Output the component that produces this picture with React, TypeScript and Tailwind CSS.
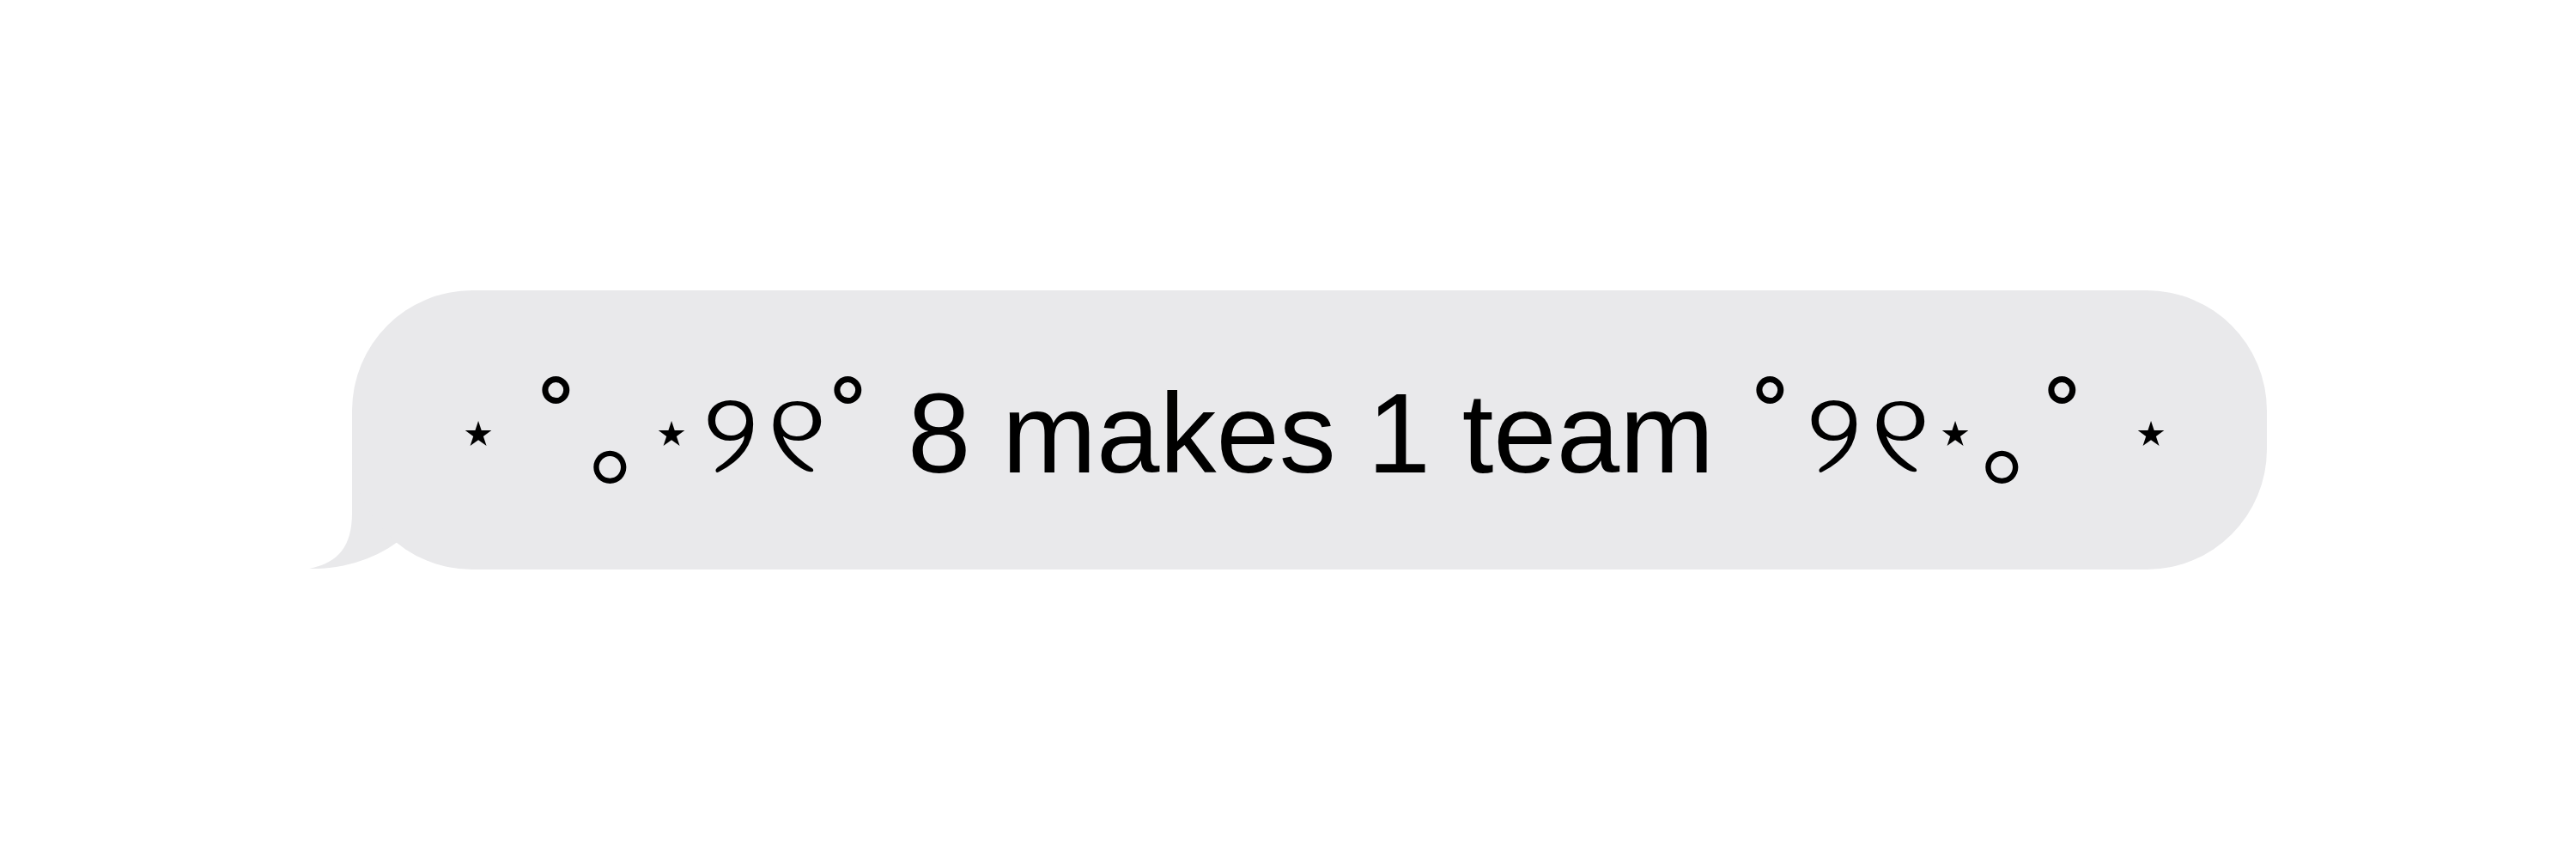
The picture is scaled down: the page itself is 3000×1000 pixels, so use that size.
import React from "react";

const FONT = '"Liberation Sans", "DejaVu Sans", "Noto Sans CJK JP", sans-serif';

function Star({ ml }: { ml: string }) {
  return (
    <span
      className={`${ml} inline-block w-[40px] text-center text-[80px] leading-none translate-y-[-19px]`}
      style={{ fontFamily: '"DejaVu Sans", sans-serif' }}
    >
      ⋆
    </span>
  );
}

function Ring({ ml }: { ml: string }) {
  return (
    <span className={`${ml} inline-block w-[40px] text-center text-[135px] leading-none translate-y-[-3px]`}>˚</span>
  );
}

function Dot({ ml }: { ml: string }) {
  return (
    <span
      className={`${ml} inline-block w-[40px] text-center text-[125px] leading-none translate-y-[5px]`}
      style={{ fontFamily: '"Noto Sans CJK JP", sans-serif' }}
    >
      ｡
    </span>
  );
}

function Bow({ ml }: { ml: string }) {
  return (
    <span className={`${ml} inline-block w-[124px] text-left text-[132px] leading-none tracking-[10px]`}>
      ୨୧
    </span>
  );
}

export default function App() {
  return (
    <div className="flex h-[1000px] w-[3000px] items-center bg-white pl-[410px]">
      <div className="relative">
        <svg
          className="absolute left-[-60px] top-[142px] h-[190px] w-[140px]"
          viewBox="0 0 140 190"
        >
          <path
            d="M60,20 L60,117 C60,155 45,175 10,182 C50,183 90,170 118,147 L130,80 L90,30 Z"
            fill="#e9e9eb"
          />
        </svg>
        <div
          className="relative flex h-[325px] w-[2230px] items-center rounded-[140px] bg-[#e9e9eb] pl-[122px] pt-[4px] text-black"
          style={{ fontFamily: FONT }}
        >
          <div className="flex items-baseline leading-none">
            <Star ml="ml-0" />
            <Ring ml="ml-[56px]" />
            <Dot ml="ml-[19px]" />
            <Star ml="ml-[30px]" />
            <Bow ml="ml-[21px]" />
            <Ring ml="ml-[26px]" />
            <span className="ml-[49px] inline-block w-[939px] whitespace-nowrap text-[132px] leading-none">8 makes 1 team</span>
            <Ring ml="ml-[46px]" />
            <Bow ml="ml-[21px]" />
            <Star ml="ml-[25px]" />
            <Dot ml="ml-[16px]" />
            <Ring ml="ml-[34px]" />
            <Star ml="ml-[58px]" />
          </div>
        </div>
      </div>
    </div>
  );
}
